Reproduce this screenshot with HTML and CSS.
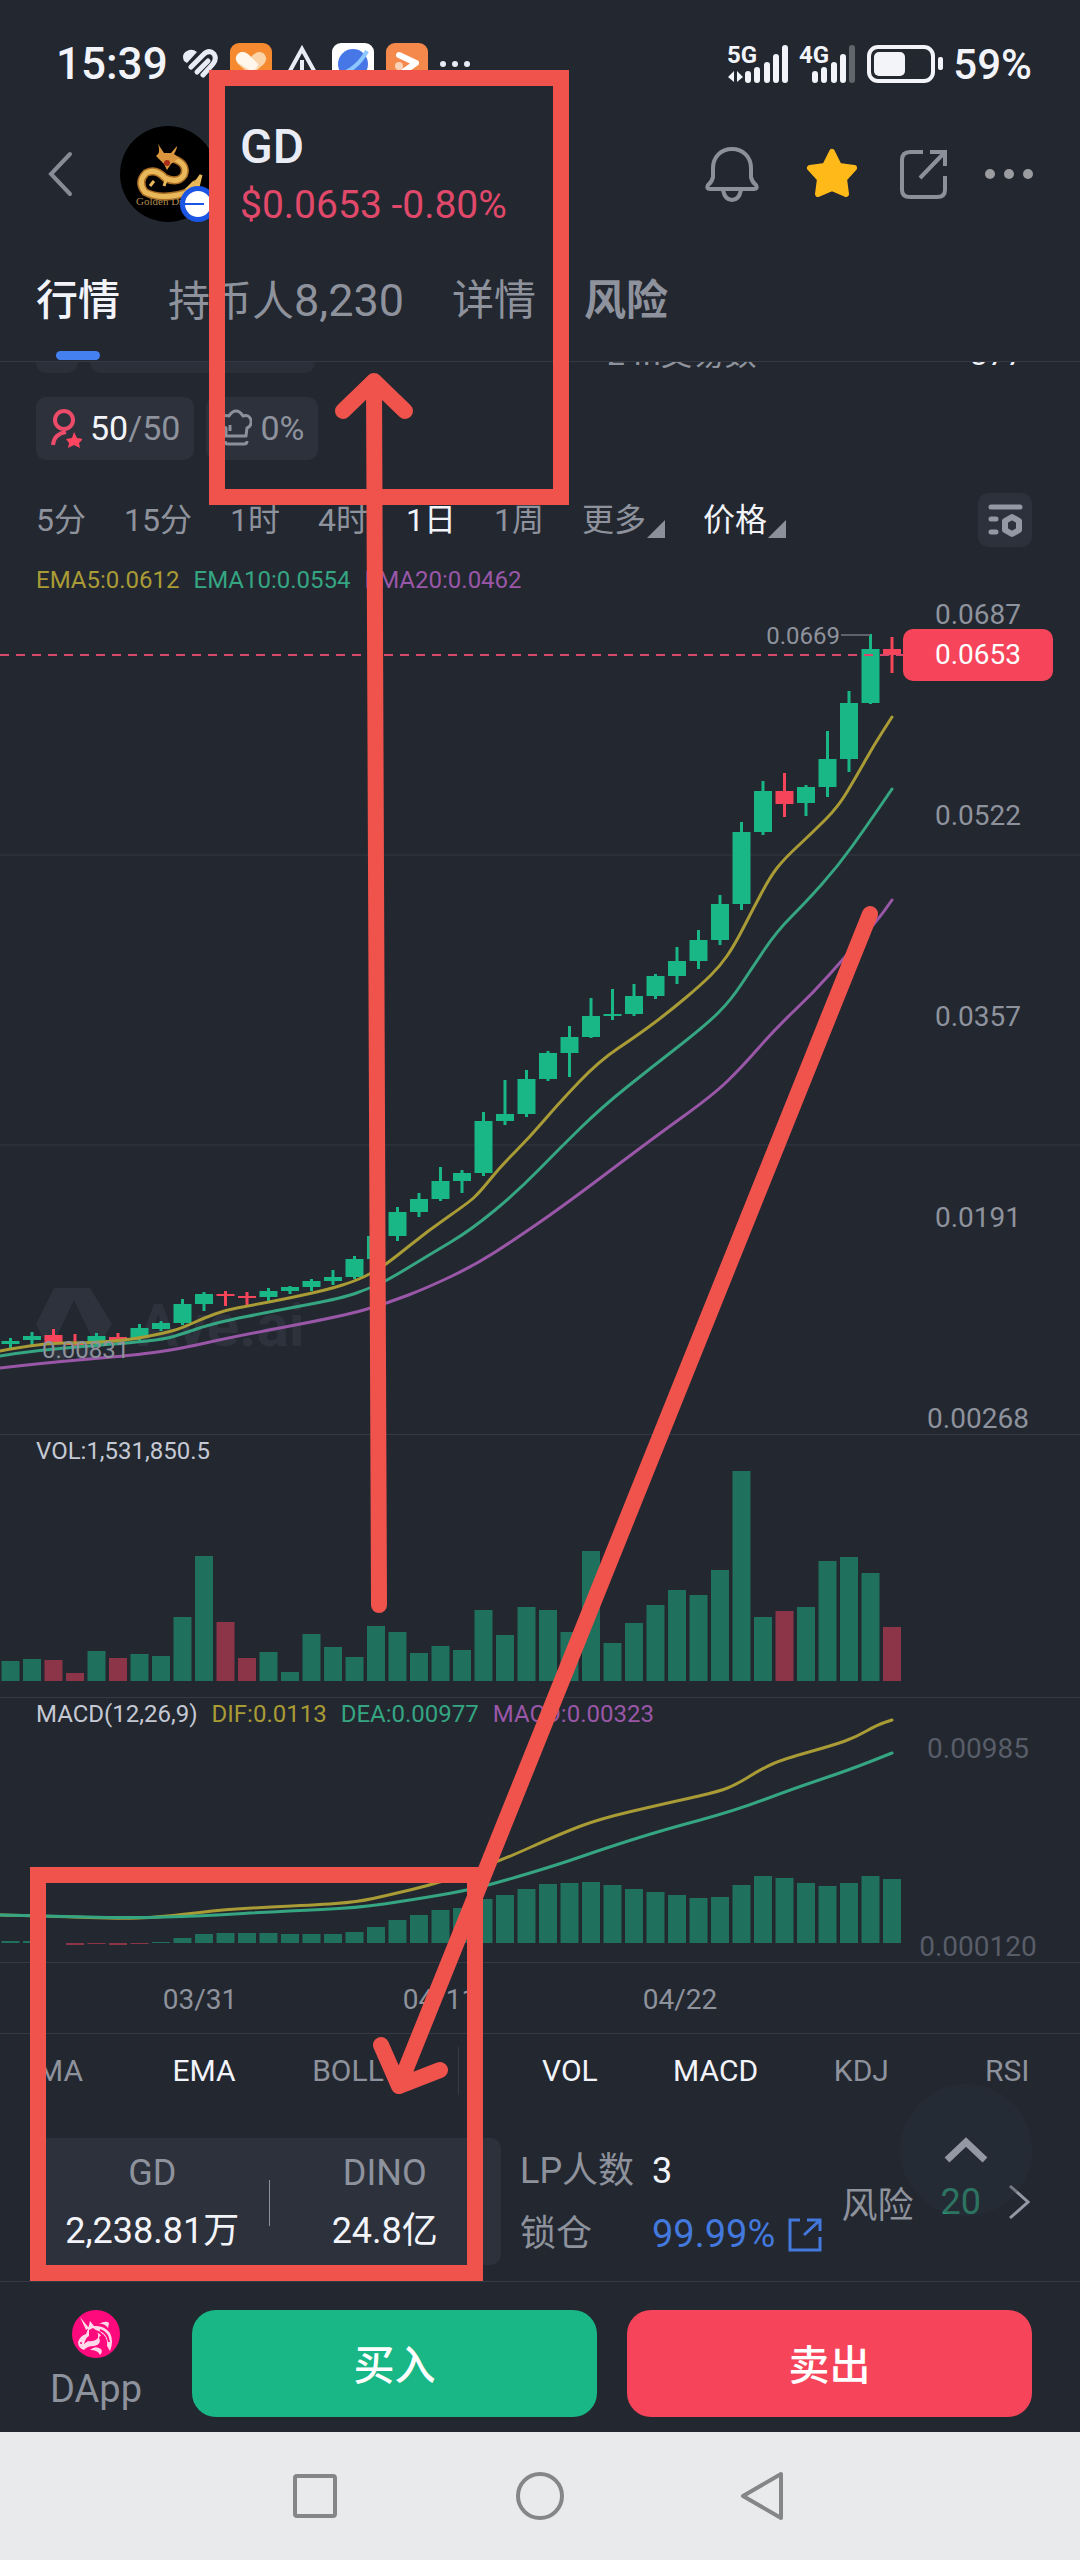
FILE: index.html
```html
<!DOCTYPE html>
<html lang="zh-CN">
<head>
    <meta charset="UTF-8">
    <meta name="viewport" content="width=device-width, initial-scale=1.0">
    <title>GD 行情</title>
    <link rel="stylesheet" href="styles.css">
</head>
<body>
    <div class="page">
        <div class="status-bar">
            <span class="time">15:39</span>
            <div class="status-icons">
                <svg width="36" height="40" viewBox="0 0 36 40" fill="none" stroke="#e9ecf5" stroke-width="5" stroke-linecap="round">
                    <path d="M2 17Q-1 10 5 7Q10 4 15 8L5 19Z" fill="#e9ecf5" stroke="none"/>
                    <path d="M9 23L21 11Q27 5 32 10Q35 15 31 20L21 31"/>
                    <path d="M15 28L26 17"/>
                </svg>
                <svg width="42" height="42" viewBox="0 0 42 42">
                    <rect width="42" height="42" rx="9" fill="#f58a30"/>
                    <path d="M21 32L8 21Q3 14 9 10Q15 7 21 14Q27 7 33 10Q39 14 34 21Z" fill="#fbd3a8"/>
                    <path d="M8 20Q3 14 9 10Q14 7 20 13L28 21Q28 26 21 28Z" fill="#fff6ec"/>
                </svg>
                <svg width="36" height="40" viewBox="0 0 36 40" fill="none" stroke="#e9ecf5" stroke-width="4">
                    <path d="M18 5L34 34H2Z"/>
                    <path d="M18 16V26"/>
                </svg>
                <svg width="42" height="42" viewBox="0 0 42 42">
                    <rect width="42" height="42" rx="9" fill="#fff"/>
                    <circle cx="21" cy="21" r="15" fill="#4777e6"/>
                    <path d="M5 32Q24 28 35 8" fill="none" stroke="#8cc8ff" stroke-width="4"/>
                </svg>
                <svg width="42" height="42" viewBox="0 0 42 42">
                    <rect width="42" height="42" rx="9" fill="#f5894b"/>
                    <path d="M13 12L30 20L14 31" fill="none" stroke="#fff" stroke-width="6" stroke-linecap="round" stroke-linejoin="round"/>
                    <circle cx="13" cy="23" r="4" fill="#fbd3b8"/>
                </svg>
                <svg width="32" height="40" viewBox="0 0 32 40" fill="#e9ecf5">
                    <circle cx="3" cy="20" r="3"/><circle cx="15" cy="20" r="3"/><circle cx="27" cy="20" r="3"/>
                </svg>
            </div>
            <div class="status-right">
                <svg class="signal" width="62" height="38" viewBox="0 0 62 38">
                    <text x="0" y="18">5G</text>
                    <path d="M1 32L7 26V37ZM16 32L10 37V26Z" fill="#f2f4fa" stroke="none"/>
                    <path d="M21 29V35M30 25V35M40 20V35M49 12V35M58 3V35"/>
                </svg>
                <svg class="signal" width="58" height="38" viewBox="0 0 58 38">
                    <text x="0" y="18">4G</text>
                    <path d="M16 29V35M25 25V35M35 20V35M44 12V35"/>
                    <path d="M53 3V35" opacity=".3"/>
                </svg>
                <svg width="76" height="38" viewBox="0 0 76 38">
                    <rect x="2" y="2" width="64" height="34" rx="9" fill="none" stroke="#f2f4fa" stroke-width="4"/>
                    <rect x="7" y="7" width="31" height="24" rx="5" fill="#f2f4fa"/>
                    <rect x="71" y="12" width="5" height="13" rx="2" fill="#f2f4fa"/>
                </svg>
                <span class="battery">59%</span>
            </div>
        </div>

        <header class="header">
            <button class="icon-btn" aria-label="返回">
                <svg width="48" height="54" viewBox="0 0 48 54" fill="none" stroke="#868b96" stroke-width="4" stroke-linecap="round">
                    <path d="M34 7L15 27L34 47"/>
                </svg>
            </button>
            <div class="avatar">
                <svg width="96" height="96" viewBox="0 0 96 96">
                    <circle cx="48" cy="48" r="48" fill="#000"/>
                    <path d="M54 33Q68 38 64 49Q58 58 45 52Q36 42 26 47Q17 56 25 66Q38 73 58 69Q72 66 76 58" fill="none" stroke="#a96d24" stroke-width="8" stroke-linecap="round"/>
                    <path d="M54 33Q68 38 64 49Q58 58 45 52Q36 42 26 47Q17 56 25 66Q38 73 58 69Q72 66 76 58" fill="none" stroke="#e9b85a" stroke-width="5" stroke-linecap="round"/>
                    <path d="M38 18Q41 27 36 30L44 38L47 44L51 38L59 32L54 28Q57 23 57 20L51 27H44Z" fill="#d9963f"/>
                    <path d="M34 55L30 60M46 54L44 60M66 64L74 56L71 63L81 49L78 61L72 67" fill="none" stroke="#e9b85a" stroke-width="3"/>
                    <circle cx="47" cy="37" r="3" fill="#a62d18"/>
                    <text x="16" y="79" class="avatar-text">Golden Dragon</text>
                </svg>
                <svg class="chain-badge" width="36" height="36" viewBox="0 0 36 36">
                    <circle cx="18" cy="18" r="18" fill="#1a55e3"/>
                    <circle cx="18" cy="18" r="13" fill="#fff"/>
                    <path d="M5 18H24" stroke="#1a55e3" stroke-width="2"/>
                </svg>
            </div>
            <div class="token">
                <h1 class="token-name">GD</h1>
                <div class="token-price">$0.0653 -0.80%</div>
            </div>
            <div class="actions">
                <button class="icon-btn" aria-label="提醒">
                    <svg width="64" height="56" viewBox="0 0 64 56" fill="none" stroke="#8b909b" stroke-width="4" stroke-linejoin="round">
                        <path d="M28 3C17 3 9 11 9 22V31Q8 36 4 39Q2 43 6 43H50Q54 43 52 39Q48 36 47 31V22C47 11 39 3 28 3Z"/>
                        <path d="M19 44Q21 54 28 54Q35 54 37 44"/>
                    </svg>
                </button>
                <button class="icon-btn" aria-label="收藏">
                    <svg width="54" height="56" viewBox="0 0 54 56">
                        <path d="M28 6L35 20L50 22L40 33L42 48L28 42L14 48L16 33L6 22L21 20Z" fill="#ffba1a" stroke="#ffba1a" stroke-width="6" stroke-linejoin="round"/>
                    </svg>
                </button>
                <button class="icon-btn" aria-label="分享">
                    <svg width="54" height="56" viewBox="0 0 54 56" fill="none" stroke="#8b909b" stroke-width="4">
                        <path d="M29 6H16Q8 6 8 14V44Q8 51 16 51H43Q51 51 51 44V30"/>
                        <path d="M36 6H51V20M51 6L26 32"/>
                    </svg>
                </button>
                <button class="icon-btn" aria-label="更多">
                    <svg width="50" height="56" viewBox="0 0 50 56" fill="#9a9c9f">
                        <circle cx="6" cy="28" r="5"/><circle cx="25" cy="28" r="5"/><circle cx="44" cy="28" r="5"/>
                    </svg>
                </button>
            </div>
        </header>

        <nav class="tabs">
            <a href="#" class="tab active">行情</a>
            <a href="#" class="tab">持币人<span class="tab-count">8,230</span></a>
            <a href="#" class="tab">详情</a>
            <a href="#" class="tab bold">风险</a>
        </nav>

        <main>
            <!-- last row of the info block, scrolled under the tabs -->
            <div class="info-clip">
                <span class="clip-chip small"></span>
                <span class="clip-chip"></span>
                <span class="clip-label">24h交易数</span>
                <span class="clip-value">377</span>
            </div>

            <div class="chips">
                <div class="chip">
                    <svg width="32" height="40" viewBox="0 0 32 40" fill="none" stroke="#ec4c6a" stroke-width="4">
                        <circle cx="14" cy="12" r="9"/>
                        <path d="M3 37Q4 26 16 24"/>
                        <path d="M24 24L27 30L33 31L29 35L30 40L24 37L18 40L19 35L16 31L22 30Z" fill="#ff4560" stroke="none"/>
                    </svg>
                    <span><b>50</b>/50</span>
                </div>
                <div class="chip">
                    <svg width="32" height="40" viewBox="0 0 32 40" fill="none" stroke="#8b909b" stroke-width="3" stroke-linejoin="round">
                        <path d="M6 28V20Q0 18 1 12Q3 6 9 8Q12 3 16 3Q20 3 23 8Q29 6 31 12Q32 18 27 20L26 28Z"/>
                        <path d="M10 17V23M5 33Q5 36 8 36H24Q27 36 27 33"/>
                    </svg>
                    <span>0%</span>
                </div>
            </div>

            <div class="intervals">
                <button class="interval">5分</button>
                <button class="interval">15分</button>
                <button class="interval">1时</button>
                <button class="interval">4时</button>
                <button class="interval active">1日</button>
                <button class="interval">1周</button>
                <button class="interval has-menu">更多</button>
                <button class="interval has-menu active">价格</button>
                <button class="settings" aria-label="图表设置">
                    <svg width="54" height="54" viewBox="0 0 54 54" fill="none" stroke="#9498a5" stroke-width="5" stroke-linecap="round">
                        <path d="M13 14H42M13 26H18M13 39H18"/>
                        <path d="M34 24L41 28V37L34 41L27 37V28Z" stroke-width="6" stroke-linejoin="round"/>
                    </svg>
                </button>
            </div>

            <section class="pane price-pane">
                <svg class="watermark" width="300" height="80" viewBox="0 0 300 80">
                    <path d="M18 4H54L76 40L54 76H42L38 62L58 58L38 16L18 58L34 62L28 76H18L0 40Z" fill="#2d323d"/>
                    <text x="102" y="62">Ave.ai</text>
                </svg>
                <svg class="plot" id="pricePlot" viewBox="0 564 1080 870" preserveAspectRatio="none"></svg>
                <div class="legend">
                    <span class="yellow">EMA5:0.0612</span>
                    <span class="green">EMA10:0.0554</span>
                    <span class="purple">EMA20:0.0462</span>
                </div>
                <div class="axis price-axis">
                    <span>0.0687</span>
                    <span>0.0522</span>
                    <span>0.0357</span>
                    <span>0.0191</span>
                    <span>0.00268</span>
                </div>
                <div class="price-tag">0.0653</div>
                <span class="mark high">0.0669</span>
                <span class="mark low">0.00831</span>
            </section>

            <section class="pane vol-pane">
                <svg class="plot" id="volPlot" viewBox="0 1435 1080 262" preserveAspectRatio="none"></svg>
                <div class="legend"><span>VOL:1,531,850.5</span></div>
            </section>

            <section class="pane macd-pane">
                <svg class="plot" id="macdPlot" viewBox="0 1698 1080 264" preserveAspectRatio="none"></svg>
                <div class="legend">
                    <span>MACD(12,26,9)</span>
                    <span class="yellow">DIF:0.0113</span>
                    <span class="green">DEA:0.00977</span>
                    <span class="purple">MACD:0.00323</span>
                </div>
                <div class="axis macd-axis">
                    <span>0.00985</span>
                    <span>0.000120</span>
                </div>
            </section>

            <div class="dates">
                <span>03/31</span>
                <span>04/11</span>
                <span>04/22</span>
            </div>

            <div class="indicators">
                <div class="ind-main">
                    <button class="ind">MA</button>
                    <button class="ind active">EMA</button>
                    <button class="ind">BOLL</button>
                </div>
                <div class="ind-sub">
                    <button class="ind active">VOL</button>
                    <button class="ind active">MACD</button>
                    <button class="ind">KDJ</button>
                    <button class="ind">RSI</button>
                </div>
            </div>

            <section class="pool">
                <div class="pool-card">
                    <div class="pool-token">
                        <div>GD</div>
                        <div class="amount">2,238.81万</div>
                    </div>
                    <div class="pool-token">
                        <div>DINO</div>
                        <div class="amount">24.8亿</div>
                    </div>
                </div>
                <div class="lp">
                    <span>LP人数</span>
                    <span class="lp-count">3</span>
                    <span>锁仓</span>
                    <a href="#" class="lock-link">99.99%
                        <svg width="36" height="36" viewBox="0 0 36 36" fill="none" stroke="#4378dd" stroke-width="3">
                            <path d="M13 3H3V33H33V20M20 3H33V14M33 3L17 18"/>
                        </svg>
                    </a>
                </div>
                <a href="#" class="risk">
                    <span>风险</span>
                    <span class="risk-score">20</span>
                    <svg width="22" height="36" viewBox="0 0 22 36" fill="none" stroke="#9498a5" stroke-width="3">
                        <path d="M2 2L20 18L2 34"/>
                    </svg>
                </a>
                <button class="to-top" aria-label="回到顶部">
                    <svg width="44" height="28" viewBox="0 0 44 28" fill="none" stroke="#9498a5" stroke-width="7">
                        <path d="M3 24L22 6L41 24"/>
                    </svg>
                </button>
            </section>
        </main>

        <footer class="action-bar">
            <a href="#" class="dapp">
                <svg width="48" height="48" viewBox="0 0 48 48">
                    <circle cx="24" cy="24" r="24" fill="#ff0a7c"/>
                    <path d="M8 7L17 18L14 20ZM16 19L18 11L22 16Q32 15 38 23Q42 31 38 41L35 36Q36 29 31 24L27 27Q30 35 22 36Q15 36 12 40Q6 38 6 32Q8 26 14 24Z" fill="#ffd9ea"/>
                    <path d="M17 20L21 18Q27 21 26 28Q22 32 16 31L12 34Q14 27 17 26Z" fill="#ff0a7c"/>
                    <path d="M27 14Q32 13 36 18L37 13Q34 10 27 14ZM18 40Q23 35 29 39Q31 42 28 45Q26 40 18 40" fill="#ffd9ea"/>
                    <path d="M28 20Q36 23 37 32M24 21Q33 24 33 34" fill="none" stroke="#ff0a7c" stroke-width="2"/>
                    <circle cx="9" cy="33" r="1" fill="#ff0a7c"/>
                </svg>
                <span>DApp</span>
            </a>
            <button class="trade buy">买入</button>
            <button class="trade sell">卖出</button>
        </footer>

        <div class="system-nav">
            <svg width="50" height="50" viewBox="0 0 50 50"><rect x="5" y="5" width="40" height="40" rx="2"/></svg>
            <svg width="50" height="50" viewBox="0 0 50 50"><circle cx="25" cy="25" r="22"/></svg>
            <svg width="50" height="50" viewBox="0 0 50 50"><path d="M41 3V47L3 25Z"/></svg>
        </div>

        <!-- hand-drawn notes over the page -->
        <svg class="notes" viewBox="0 0 1080 2560" preserveAspectRatio="none">
            <rect x="217" y="78" width="344" height="419"/>
            <rect x="38" y="1875" width="437" height="398"/>
            <g stroke-linecap="round" stroke-linejoin="round">
                <path d="M379 1605L374 381M343 411L374 381L405 411"/>
                <path d="M870 914L399 2086M381 2045L399 2086L440 2070"/>
            </g>
        </svg>
    </div>

    <script src="chart.js"></script>
</body>
</html>
```

FILE: styles.css
```css
* {
    box-sizing: border-box;
}
body {
    margin: 0;
    background: #222730;
    color: #8e929c;
    font-family: Roboto, "Noto Sans CJK SC", sans-serif;
    font-size: 36px;
}
button {
    padding: 0;
    border: none;
    background: none;
    color: inherit;
    font: inherit;
    cursor: pointer;
}
a {
    color: inherit;
    text-decoration: none;
}
svg {
    display: block;
    flex: none;
}
.page {
    position: relative;
    display: flex;
    flex-direction: column;
    min-height: 100vh;
    overflow: hidden;
}

/* status bar */
.status-bar {
    display: flex;
    align-items: center;
    height: 112px;
    padding: 16px 48px 0 56px;
    color: #f2f4fa;
    font-weight: 500;
}
.time {
    font-size: 44px;
}
.status-icons {
    display: flex;
    align-items: center;
    gap: 12px;
    margin-left: 14px;
}
.status-right {
    display: flex;
    align-items: center;
    gap: 10px;
    margin-left: auto;
}
.battery {
    font-size: 42px;
}
.signal {
    overflow: visible;
    fill: none;
    stroke: #f2f4fa;
    stroke-width: 6;
    stroke-linecap: round;
}
.signal text {
    fill: #f2f4fa;
    stroke: none;
    font-size: 24px;
    font-weight: 700;
}

/* token header */
.header {
    display: flex;
    align-items: center;
    height: 124px;
    padding: 0 46px 0 36px;
}
.avatar {
    position: relative;
    margin: 0 24px 0 36px;
}
.avatar-text {
    fill: #b08a4c;
    font-family: "Liberation Serif", serif;
    font-size: 11px;
}
.chain-badge {
    position: absolute;
    right: 0;
    bottom: 0;
}
.token {
    padding-top: 4px;
}
.token-name {
    margin: 0;
    color: #e9ecf5;
    font-size: 48px;
    font-weight: 500;
    line-height: 58px;
}
.token-price {
    color: #e0496a;
    font-size: 39px;
    line-height: 58px;
}
.actions {
    display: flex;
    gap: 36px;
    margin-left: auto;
}

/* tabs */
.tabs {
    display: flex;
    gap: 48px;
    height: 126px;
    padding: 34px 36px 0;
    border-bottom: 1px solid #343944;
    font-size: 42px;
    line-height: 62px;
}
.tab {
    position: relative;
}
.tab-count {
    font-size: 45px;
}
.tab.active {
    color: #f2f4fa;
    font-weight: 500;
}
.tab.bold {
    font-weight: 700;
}
.tab.active::after {
    content: "";
    position: absolute;
    left: 20px;
    right: 20px;
    bottom: 1px;
    height: 9px;
    border-radius: 5px;
    background: #4580f0;
}

/* info row cut off by the tabs */
.info-clip {
    display: flex;
    align-items: flex-end;
    gap: 12px;
    height: 11px;
    padding: 0 56px 0 36px;
    overflow: hidden;
    font-size: 32px;
    line-height: 38px;
}
.clip-chip {
    width: 225px;
    height: 63px;
    border-radius: 10px;
    background: #2a2f3a;
}
.clip-chip.small {
    width: 42px;
}
.clip-label {
    margin-left: 280px;
}
.clip-value {
    margin-left: auto;
    color: #f2f4fa;
}

.chips {
    display: flex;
    gap: 12px;
    margin-top: 24px;
    padding: 0 36px;
}
.chip {
    display: flex;
    align-items: center;
    gap: 8px;
    height: 63px;
    padding: 0 14px 1px;
    border-radius: 10px;
    background: #2c313c;
    font-size: 34px;
}
.chip b {
    color: #f2f4fa;
    font-weight: 400;
}

/* interval picker */
.intervals {
    display: flex;
    align-items: center;
    gap: 38px;
    height: 54px;
    margin: 33px 48px 17px 36px;
    font-size: 32px;
    line-height: 50px;
}
.interval.active {
    color: #f2f4fa;
}
.interval.has-menu {
    display: flex;
    align-items: center;
}
.interval.has-menu::after {
    content: "";
    align-self: flex-end;
    margin: 0 0 7px 1px;
    border-bottom: 18px solid #8b909b;
    border-left: 18px solid transparent;
}
.settings {
    margin-left: auto;
    border-radius: 10px;
    background: #2c313c;
}

/* chart */
.pane {
    position: relative;
    border-bottom: 1px solid #343944;
}
.price-pane {
    height: 871px;
}
.vol-pane {
    height: 263px;
}
.macd-pane {
    height: 265px;
}
.plot {
    position: absolute;
    top: 0;
    left: 0;
    width: 100%;
    height: 100%;
}
.watermark {
    position: absolute;
    left: 36px;
    bottom: 70px;
    fill: #2d323d;
    font-size: 60px;
    font-weight: 700;
}
.legend {
    position: relative;
    display: flex;
    gap: 14px;
    padding: 0 36px;
    color: #c5c9d3;
    font-size: 24px;
    line-height: 32px;
}
.yellow {
    color: #a99b35;
}
.green {
    color: #35a582;
}
.purple {
    color: #9a57a8;
}
.axis {
    position: absolute;
    right: 27px;
    display: flex;
    flex-direction: column;
    justify-content: space-between;
    width: 150px;
    font-size: 28px;
    line-height: 32px;
    text-align: center;
}
.price-axis {
    top: 35px;
    bottom: -1px;
}
.macd-axis {
    top: 35px;
    bottom: -1px;
    color: #585d67;
}
.price-tag {
    position: absolute;
    top: 65px;
    right: 27px;
    width: 150px;
    border-radius: 10px;
    background: #f6455b;
    color: #fff;
    font-size: 28px;
    line-height: 52px;
    text-align: center;
}
.mark {
    position: absolute;
    font-size: 24px;
    line-height: 32px;
}
.mark.high {
    top: 56px;
    right: 240px;
}
.mark.low {
    left: 42px;
    bottom: 68px;
}
.plot .grid {
    stroke: #2a2f39;
    stroke-width: 2;
}
.plot .last {
    stroke: #d8486a;
    stroke-width: 2;
    stroke-dasharray: 9 7;
}
.plot .lead {
    stroke: #5d626d;
    stroke-width: 2;
}
.plot .up {
    fill: #18b785;
}
.plot .down {
    fill: #f6455b;
}
.plot .bar-up {
    fill: #1f705c;
}
.plot .bar-down {
    fill: #8c3548;
}
.plot .line {
    fill: none;
    stroke: currentColor;
    stroke-width: 3;
    stroke-linecap: round;
}

.dates {
    display: grid;
    grid-template-columns: repeat(3, 24%);
    height: 71px;
    padding: 3px 0 0 80px;
    border-bottom: 1px solid #343944;
    font-size: 28px;
    line-height: 68px;
    text-align: center;
}

.indicators {
    display: flex;
    align-items: center;
    height: 74px;
    font-size: 30px;
}
.ind-main {
    display: flex;
    width: 40%;
    margin-left: -12px;
}
.ind-sub {
    display: flex;
    flex: 1;
    margin-left: 38px;
    padding-left: 38px;
    border-left: 1px solid #343944;
}
.ind {
    flex: 1;
    line-height: 48px;
}
.ind.active {
    color: #f2f4fa;
}

/* pool info */
.pool {
    position: relative;
    display: flex;
    align-items: center;
    margin-top: 29px;
    padding: 0 50px 15px 36px;
    border-bottom: 1px solid #343944;
}
.pool-card {
    display: flex;
    width: 465px;
    padding: 6px 0 5px;
    border-radius: 10px;
    background: #2c313c;
    line-height: 58px;
    text-align: center;
}
.pool-token {
    position: relative;
    flex: 1;
}
.pool-token + .pool-token::before {
    content: "";
    position: absolute;
    left: 0;
    top: 36px;
    width: 1px;
    height: 46px;
    background: #8b909b;
}
.amount {
    color: #f2f4fa;
}
.lp {
    display: grid;
    grid-template-columns: 132px auto;
    margin-left: 19px;
    padding-top: 3px;
    line-height: 63px;
}
.lp-count {
    color: #f2f4fa;
}
.lock-link {
    display: flex;
    align-items: center;
    gap: 12px;
    color: #4378dd;
    font-size: 38px;
}
.risk {
    display: flex;
    align-items: center;
    gap: 27px;
    margin-left: auto;
}
.risk-score {
    color: #2c8f72;
}
.to-top {
    position: absolute;
    right: 48px;
    top: -53px;
    display: flex;
    align-items: center;
    justify-content: center;
    width: 132px;
    height: 132px;
    border-radius: 50%;
    background: rgba(46, 54, 64, 0.3);
}

/* buy / sell */
.action-bar {
    display: flex;
    gap: 30px;
    padding: 28px 48px 15px 36px;
}
.dapp {
    display: flex;
    flex-direction: column;
    align-items: center;
    width: 120px;
    height: 107px;
    margin-right: 6px;
    font-size: 38px;
    line-height: 62px;
}
.trade {
    flex: 1;
    height: 107px;
    padding-bottom: 3px;
    border-radius: 24px;
    color: #fff;
    font-size: 41px;
    font-weight: 500;
}
.buy {
    background: #18b785;
}
.sell {
    background: #f6455b;
}

.system-nav {
    display: flex;
    flex: 1;
    align-items: center;
    justify-content: center;
    gap: 175px;
    min-height: 120px;
    background: #e9eaec;
    fill: none;
    stroke: #858688;
    stroke-width: 4;
    stroke-linejoin: round;
}

.notes {
    position: absolute;
    top: 0;
    left: 0;
    width: 100%;
    height: 100%;
    fill: none;
    stroke: #f0524c;
    stroke-width: 16;
    pointer-events: none;
}
```

FILE: chart.js
```js
// one row per day: high, body top, body bottom, low, volume, macd, down?
const days = [
    [1338, 1341, 1344, 1349, 20, 2],
    [1332, 1336, 1340, 1345, 22, 2],
    [1329, 1335, 1344, 1345, 21, 0, 1],
    [1334, 1343, 1345, 1347, 8, -2, 1],
    [1333, 1336, 1344, 1345, 30, -1],
    [1333, 1337, 1340, 1343, 23, -2, 1],
    [1324, 1328, 1338, 1343, 27, -1],
    [1321, 1323, 1329, 1331, 25, 1],
    [1299, 1304, 1323, 1325, 64, 5],
    [1292, 1294, 1304, 1311, 125, 9],
    [1291, 1294, 1296, 1306, 59, 10, 1],
    [1292, 1296, 1298, 1305, 23, 10, 1],
    [1288, 1291, 1297, 1301, 29, 10],
    [1286, 1287, 1291, 1294, 9, 9],
    [1279, 1281, 1287, 1291, 47, 9],
    [1270, 1277, 1281, 1285, 34, 9],
    [1256, 1259, 1277, 1279, 24, 11],
    [1233, 1236, 1259, 1261, 55, 16],
    [1207, 1212, 1236, 1241, 49, 23],
    [1193, 1199, 1212, 1217, 28, 28],
    [1167, 1181, 1199, 1201, 35, 33],
    [1170, 1173, 1181, 1193, 31, 35],
    [1112, 1121, 1173, 1176, 71, 44],
    [1080, 1114, 1121, 1125, 46, 48],
    [1070, 1079, 1114, 1117, 74, 54],
    [1051, 1053, 1079, 1081, 71, 59],
    [1026, 1037, 1053, 1077, 49, 60],
    [998, 1016, 1037, 1038, 130, 61],
    [989, 1014, 1016, 1020, 38, 58],
    [984, 996, 1014, 1016, 58, 54],
    [974, 976, 996, 999, 76, 51],
    [947, 961, 976, 984, 91, 48],
    [930, 940, 961, 969, 86, 45],
    [895, 904, 940, 945, 111, 46],
    [822, 832, 904, 910, 210, 58],
    [781, 791, 832, 835, 64, 67],
    [773, 791, 804, 817, 70, 65, 1],
    [785, 787, 803, 816, 74, 60],
    [731, 759, 787, 797, 120, 57],
    [691, 703, 759, 772, 124, 60],
    [634, 649, 703, 704, 108, 67],
    [637, 649, 655, 673, 54, 64, 1]
];

const ema5 = [[0,1351],[43,1343],[86,1343],[129,1340],[165,1333],[182,1328],[204,1318],[226,1310],[248,1306],[290,1298],[330,1289],[355,1281],[372,1273],[388,1263],[429,1230],[468,1203],[480,1192],[500,1167],[529,1138],[559,1103],[599,1061],[638,1035],[670,1011],[702,984],[720,966],[734,946],[752,911],[770,877],[784,859],[813,832],[838,807],[856,777],[874,745],[892,717]];
const ema10 = [[0,1356],[36,1350],[129,1343],[165,1339],[182,1334],[214,1323],[279,1310],[343,1298],[370,1288],[388,1280],[429,1255],[471,1230],[518,1191],[560,1148],[602,1107],[652,1067],[706,1025],[731,1000],[752,968],[777,931],[806,902],[838,866],[866,827],[892,789]];
const ema20 = [[0,1368],[43,1363],[136,1355],[179,1349],[232,1337],[343,1316],[388,1303],[429,1287],[475,1265],[514,1240],[566,1204],[652,1139],[713,1095],[741,1068],[777,1027],[813,993],[845,957],[877,921],[892,900]];
const dif = [[0,1915],[46,1916],[129,1919],[171,1916],[229,1909],[314,1905],[357,1902],[389,1895],[439,1883],[500,1861],[560,1834],[599,1819],[663,1804],[713,1793],[734,1786],[763,1768],[784,1759],[834,1745],[856,1737],[877,1725],[892,1720]];
const dea = [[0,1915],[46,1916],[129,1918],[200,1916],[286,1911],[357,1908],[411,1900],[464,1891],[500,1882],[560,1864],[606,1848],[663,1830],[734,1811],[795,1788],[849,1770],[892,1753]];

const step = 21.5;
const barWidth = 18;
const volBase = 1681;
const macdBase = 1943;

function rect(x, y, w, h, cls) {
    return `<rect x="${x}" y="${y}" width="${w}" height="${h}" class="${cls}"/>`;
}

// curve through the midpoints, so that the line stays smooth
function line(points, color) {
    let d = `M${points[0]}`;
    for (let i = 1; i < points.length - 1; i++) {
        const [x, y] = points[i];
        const [nx, ny] = points[i + 1];
        d += `Q${x} ${y} ${(x + nx) / 2} ${(y + ny) / 2}`;
    }
    d += `L${points[points.length - 1]}`;
    return `<path d="${d}" class="line ${color}"/>`;
}

let price = '<path class="grid" d="M0 855H1080M0 1145H1080"/>';
let vol = '';
let macd = '';

days.forEach(([high, top, bottom, low, v, m, down], i) => {
    const mid = 10.5 + i * step;
    const left = mid - barWidth / 2;
    price += rect(mid - 1.5, high, 3, low - high, down ? 'down' : 'up');
    price += rect(left, top, barWidth, bottom - top, down ? 'down' : 'up');
    vol += rect(left, volBase - v, barWidth, v, down ? 'bar-down' : 'bar-up');
    macd += rect(left, m > 0 ? macdBase - m : macdBase, barWidth, Math.abs(m), m < 0 ? 'bar-down' : 'bar-up');
});

price += line(ema20, 'purple') + line(ema10, 'green') + line(ema5, 'yellow');
price += '<path class="last" d="M0 655H903"/><path class="lead" d="M841 635H870"/>';
macd += line(dif, 'yellow') + line(dea, 'green');

document.getElementById('pricePlot').innerHTML = price;
document.getElementById('volPlot').innerHTML = vol;
document.getElementById('macdPlot').innerHTML = macd;
```
